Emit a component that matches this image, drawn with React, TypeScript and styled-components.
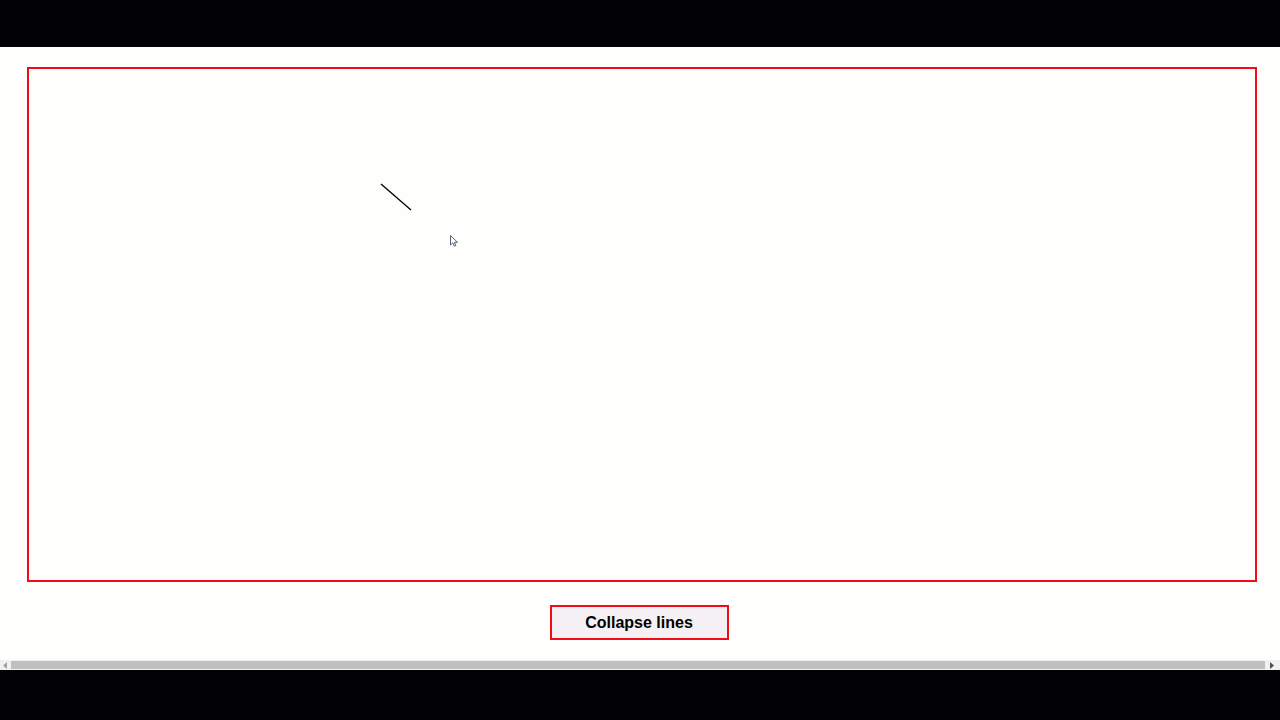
import React from "react";
import styled, { createGlobalStyle } from "styled-components";

const Global = createGlobalStyle`
  html, body { margin: 0; padding: 0; background: #020204; }
  body { font-family: "Liberation Sans", Arial, sans-serif; }
`;

const Screen = styled.div`
  width: 1280px;
  height: 720px;
  display: flex;
  flex-direction: column;
  background: #020204;
`;

const TopBar = styled.div`
  height: 47px;
  flex: none;
`;

const Viewport = styled.div`
  height: 623px;
  background: #fefefd;
  display: flex;
  flex-direction: column;
`;

const Content = styled.div`
  flex: 1;
  display: flex;
  flex-direction: column;
  align-items: center;
  padding-top: 20px;
`;

const Canvas = styled.div`
  position: relative;
  width: 1230px;
  height: 515px;
  box-sizing: border-box;
  border: 2px solid #f20d16;
  margin-left: 4px;
  background: #fefefd;
`;

const Drawing = styled.svg`
  position: absolute;
  inset: 0;
  width: 100%;
  height: 100%;
`;

const Button = styled.button`
  margin-top: 23px;
  margin-right: 2px;
  width: 179px;
  height: 35px;
  box-sizing: border-box;
  border: 2px solid #f20d16;
  background: #f4f0f3;
  font-family: "Liberation Sans", Arial, sans-serif;
  font-weight: bold;
  font-size: 16px;
  color: #000;
  padding: 0;
`;

const Scrollbar = styled.div`
  height: 10px;
  display: flex;
  align-items: center;
  background: #f1f1f1;
  flex: none;
`;

const Arrow = styled.div<{ $w: number }>`
  width: ${(p) => p.$w}px;
  height: 10px;
  display: flex;
  align-items: center;
  justify-content: center;
  flex: none;
`;

const Thumb = styled.div`
  flex: 1;
  height: 8px;
  background: #c2bfc2;
`;

export default function App() {
  return (
    <>
      <Global />
      <Screen>
        <TopBar />
        <Viewport>
          <Content>
            <Canvas>
              <Drawing>
                <line x1="352" y1="115" x2="382" y2="141" stroke="#000" strokeWidth="1.3" />
                <g transform="translate(421,166)">
                  <path d="M0.5 0.5 L0.5 10 L2.8 7.8 L4.4 11.2 L5.8 10.6 L4.3 7.3 L7.5 7.3 Z" fill="#fff" stroke="#55607a" strokeWidth="1" />
                </g>
              </Drawing>
            </Canvas>
            <Button>Collapse lines</Button>
          </Content>
          <Scrollbar>
            <Arrow $w={11}>
              <svg width="5" height="7"><path d="M4 0 L0 3.5 L4 7 Z" fill="#a3a3a3" /></svg>
            </Arrow>
            <Thumb />
            <Arrow $w={15}>
              <svg width="5" height="7"><path d="M0 0 L4 3.5 L0 7 Z" fill="#505050" /></svg>
            </Arrow>
          </Scrollbar>
        </Viewport>
      </Screen>
    </>
  );
}
